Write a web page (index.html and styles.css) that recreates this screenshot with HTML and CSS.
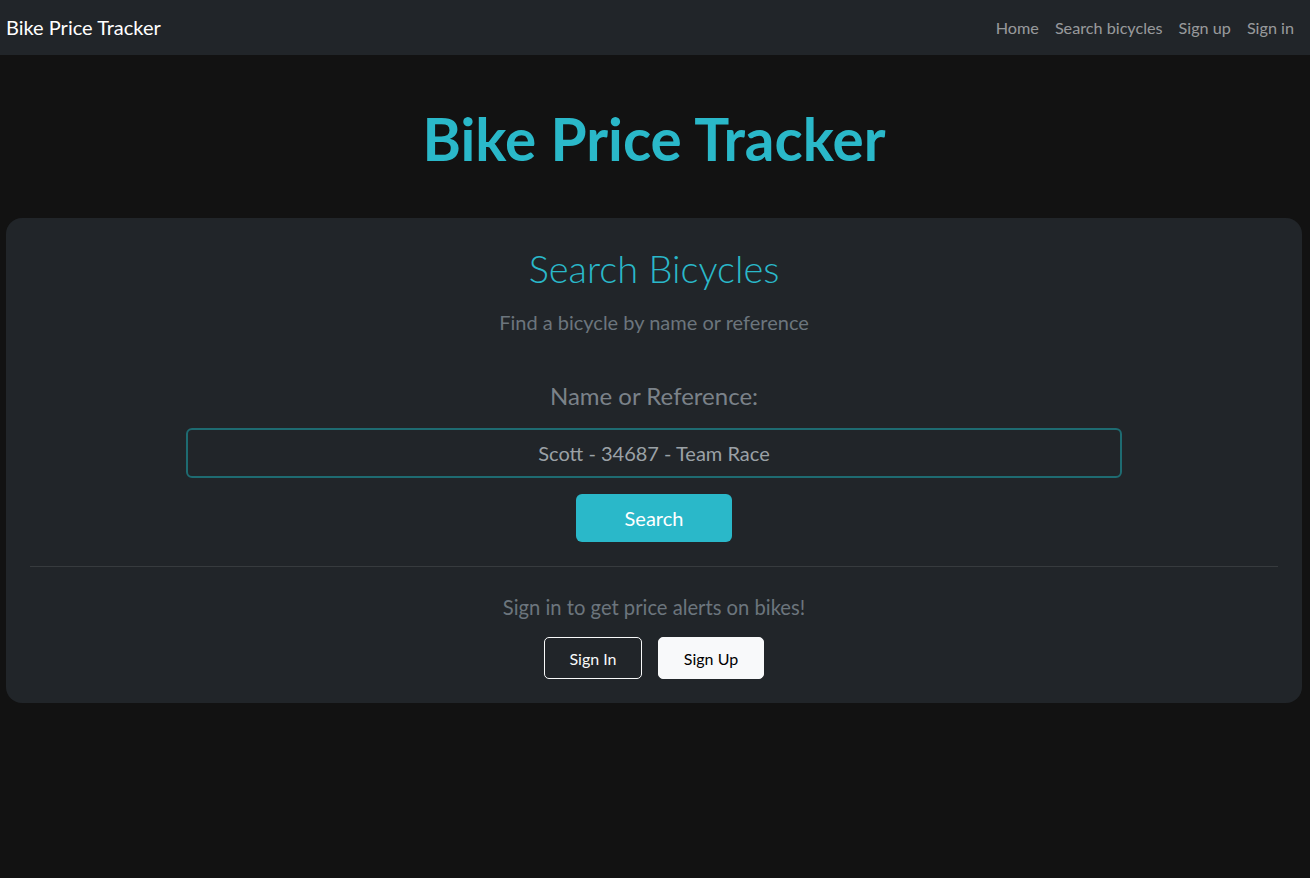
FILE: index.html
```html
<!DOCTYPE html>
<html lang="en">
<head>
<meta charset="utf-8">
<title>Bike Price Tracker</title>
<link rel="stylesheet" href="styles.css">
</head>
<body>
<nav class="navbar">
  <a class="brand" href="#">Bike Price Tracker</a>
  <ul class="nav-links">
    <li><a href="#">Home</a></li>
    <li><a href="#">Search bicycles</a></li>
    <li><a href="#">Sign up</a></li>
    <li><a href="#">Sign in</a></li>
  </ul>
</nav>
<main class="main">
  <h1 class="page-title">Bike Price Tracker</h1>
  <section class="card">
    <h2 class="card-title">Search Bicycles</h2>
    <p class="card-subtitle">Find a bicycle by name or reference</p>
    <form class="search-form">
      <label class="search-label" for="q">Name or Reference:</label>
      <input class="search-input" id="q" type="text" placeholder="Scott - 34687 - Team Race">
      <button class="btn-search" type="button">Search</button>
    </form>
    <hr class="divider">
    <p class="signin-text">Sign in to get price alerts on bikes!</p>
    <div class="auth-buttons">
      <button class="btn-outline" type="button">Sign In</button>
      <button class="btn-light" type="button">Sign Up</button>
    </div>
  </section>
</main>
</body>
</html>
```
FILE: styles.css
```css
* { box-sizing: border-box; }
html, body { margin: 0; padding: 0; }
body {
  background: #121212;
  font-family: "Lato", "Noto Sans", sans-serif;
  color: #dee2e6;
}
.navbar {
  height: 55px;
  background: #212529;
  display: flex;
  align-items: center;
  justify-content: space-between;
  padding: 0 8px 0 6px;
}
.brand {
  color: #fff;
  font-size: 20px;
  text-decoration: none;
  margin-top: -1px;
}
.nav-links {
  list-style: none;
  margin: 0;
  padding: 0;
  display: flex;
  margin-top: -1px;
}
.nav-links a {
  display: block;
  padding: 8px;
  color: rgba(255,255,255,0.55);
  font-size: 16.2px;
  text-decoration: none;
}
.main {
  padding: 0 8px 0 6px;
}
.page-title {
  margin: 47px 0 44px;
  text-align: center;
  font-size: 58.5px;
  line-height: 72px;
  font-weight: 700;
  color: #2ab8c9;
}
.card {
  background: #212529;
  border-radius: 16px;
  padding: 24px;
  text-align: center;
}
.card-title {
  margin: 2px 0 0;
  font-size: 38px;
  line-height: 48px;
  font-weight: 300;
  color: #2ab8c9;
}
.card-subtitle {
  margin: 15px 0 0;
  font-size: 20px;
  line-height: 30px;
  color: #6c757d;
}
.search-form {
  display: flex;
  flex-direction: column;
  align-items: center;
  margin-top: 42px;
}
.search-label {
  font-size: 24px;
  line-height: 33px;
  color: #7b8289;
}
.search-input {
  margin-top: 16px;
  width: 936px;
  height: 50px;
  background: #212529;
  border: 2px solid #1e6b71;
  border-radius: 6px;
  text-align: center;
  font-family: inherit;
  font-size: 20px;
  color: #dee2e6;
}
.search-input::placeholder { color: #9ba1a6; }
.btn-search {
  margin-top: 16px;
  width: 156px;
  height: 48px;
  background: #2ab8c9;
  border: none;
  border-radius: 6px;
  color: #fff;
  font-family: inherit;
  font-size: 20px;
}
.divider {
  margin: 24px 0 0;
  border: 0;
  border-top: 1px solid #373b3e;
}
.signin-text {
  margin: 25px 0 0;
  font-size: 20.2px;
  line-height: 30px;
  color: #6c757d;
}
.auth-buttons {
  margin-top: 15px;
  display: flex;
  justify-content: center;
  gap: 16px;
}
.btn-outline, .btn-light {
  height: 42px;
  border-radius: 5px;
  font-family: inherit;
  font-size: 16px;
}
.btn-outline {
  width: 98px;
  background: transparent;
  border: 1px solid #f8f9fa;
  color: #f8f9fa;
}
.btn-light {
  width: 106px;
  background: #f8f9fa;
  border: 1px solid #f8f9fa;
  color: #000;
}
```
